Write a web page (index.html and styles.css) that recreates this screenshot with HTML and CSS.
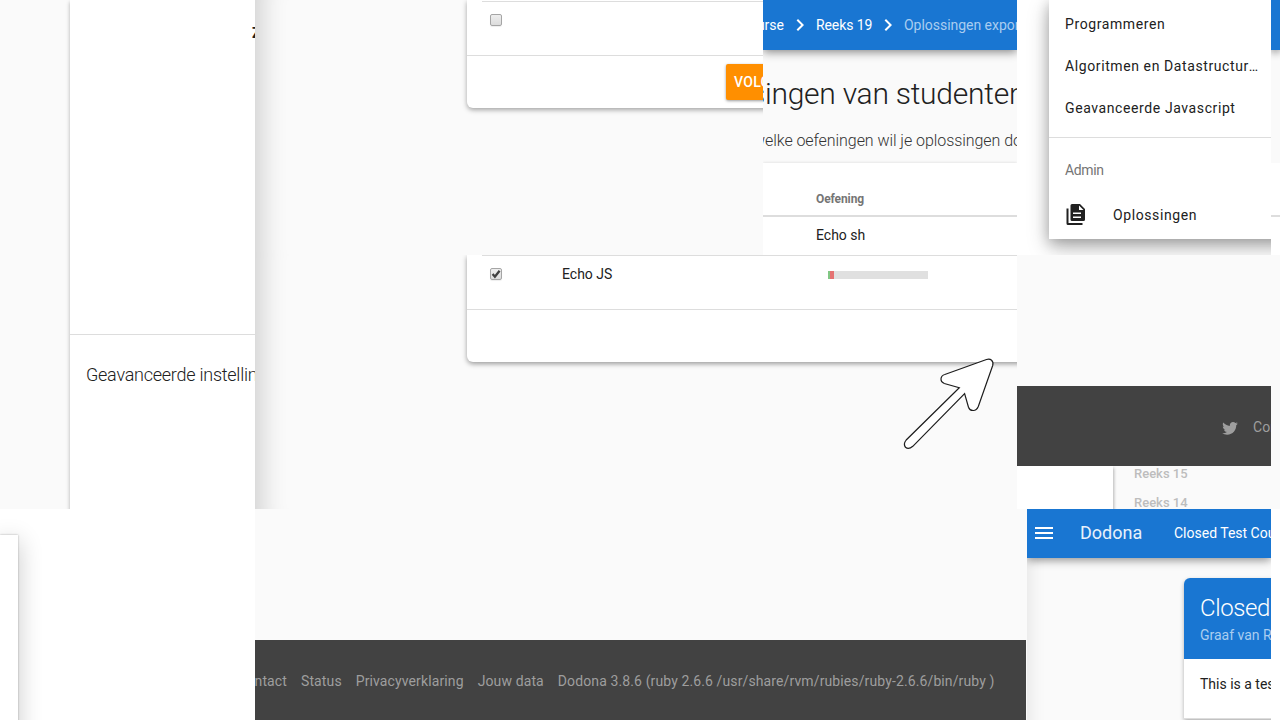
FILE: index.html
```html
<!DOCTYPE html>
<html lang="nl">
<head>
<meta charset="utf-8">
<title>Dodona</title>
<link rel="stylesheet" href="styles.css">
</head>
<body>
<main class="collage">
  <section class="tile settings">
    <div class="settings-card">
      <div class="settings-top"><span class="bold-cut">Z</span></div>
      <div class="settings-title">Geavanceerde instellingen</div>
    </div>
  </section>

  <section class="tile export-next">
    <div class="list-card">
      <div class="list-row"><span class="check"></span></div>
      <div class="list-actions"><span class="next-button">VOLGENDE</span></div>
    </div>
  </section>

  <section class="tile export-head">
    <header class="crumbs">
      <div class="crumb-cut"><span>Closed Test Course</span></div>
      <svg class="chevron" viewBox="0 0 24 24"><path d="M8.59 16.58 13.17 12 8.59 7.41 10 6l6 6-6 6z"/></svg>
      <span class="crumb">Reeks 19</span>
      <svg class="chevron" viewBox="0 0 24 24"><path d="M8.59 16.58 13.17 12 8.59 7.41 10 6l6 6-6 6z"/></svg>
      <span class="crumb-dim">Oplossingen exporteren</span>
    </header>
    <div class="headline">singen van studenten</div>
    <div class="subline">welke oefeningen wil je oplossingen downloaden?</div>
    <div class="export-table">
      <div class="table-head">Oefening</div>
      <div class="table-row">Echo sh</div>
    </div>
  </section>

  <section class="tile drawer-tile">
    <nav class="drawer">
      <div class="drawer-courses">
        <div class="drawer-item">Programmeren</div>
        <div class="drawer-item">Algoritmen en Datastructuren</div>
        <div class="drawer-item">Geavanceerde Javascript</div>
      </div>
      <div class="drawer-label">Admin</div>
      <div class="drawer-link">
        <svg class="doc-icon" viewBox="0 0 22 22"><path fill-rule="evenodd" d="M7 0h8l5 5v10.500a1.500 1.500 0 0 1-1.500 1.500H7a1.500 1.500 0 0 1-1.500-1.500v-14A1.500 1.500 0 0 1 7 0m7 1.500V6h4.500zM8 8.500V10h8V8.500zm0 4V14h8v-1.500z"/><path d="M1.500 4.500v15A1.500 1.500 0 0 0 3 21h14.500v-2h-14V4.500z"/></svg>
        <span>Oplossingen</span>
      </div>
    </nav>
  </section>

  <section class="tile edge">
    <div class="edge-bar"></div>
    <div class="edge-gap"></div>
    <div class="edge-head"></div>
  </section>

  <section class="tile export-list">
    <div class="result-card">
      <div class="result-row">
        <span class="check"><svg viewBox="0 0 12 12"><path d="M2.6 6.1 4.9 8.7 9.6 2.7" fill="none" stroke="#3f3f3f" stroke-width="2.3"/></svg></span>
        <span class="result-name">Echo JS</span>
        <span class="progress"><i class="good"></i><i class="bad"></i></span>
      </div>
      <div class="result-actions"></div>
    </div>
    <svg class="pointer" viewBox="0 0 94 94"><path d="M84.500 2.500C88.500 1 92 4 90.700 8.500L76.300 49.500Q74.500 53.700 71 53.500 67.500 53.300 66.500 50.200L62.600 36.700 10.800 89.300Q6.500 93 3.500 90.300 1 87 4.200 83L57.300 30.700 42.300 26.500Q38.800 25 39 21.800 39.400 18.300 42.800 17.500Z" fill="#fff" stroke="#1d1d1d" stroke-width="1.2"/></svg>
  </section>

  <section class="tile series">
    <div class="footer-start">
      <svg class="bird" viewBox="0 0 24 24"><path d="M22.460 6c-.77.35-1.600.58-2.460.69.88-.53 1.560-1.370 1.880-2.380-.83.5-1.750.85-2.720 1.050C18.370 4.500 17.260 4 16 4c-2.350 0-4.270 1.920-4.270 4.290 0 .34.04.67.11.98C8.280 9.090 5.110 7.380 3 4.790c-.37.63-.58 1.370-.58 2.150 0 1.490.75 2.810 1.910 3.560-.71 0-1.370-.2-1.950-.5v.03c0 2.080 1.480 3.820 3.440 4.210a4.220 4.220 0 0 1-1.930.07 4.280 4.280 0 0 0 4 2.980 8.521 8.521 0 0 1-5.330 1.840c-.34 0-.68-.02-1.020-.06C3.440 20.290 5.700 21 8.120 21 16 21 20.330 14.460 20.330 8.790c0-.19 0-.37-.01-.56.84-.6 1.560-1.360 2.140-2.230z"/></svg>
      <span>Contact</span>
    </div>
    <div class="series-body">
      <div class="series-sheet"></div>
      <div class="series-list"><span>Reeks 15</span><span>Reeks 14</span></div>
    </div>
  </section>

  <div class="edge-mid"></div>

  <div class="bottom">
    <section class="tile dialog-tile"><div class="dialog"></div></section>
    <section class="tile footer-tile">
      <footer class="footer">
        <div class="footer-cut"><span>Contact</span></div>
        <span>Status</span>
        <span>Privacyverklaring</span>
        <span>Jouw data</span>
        <span>Dodona 3.8.6 (ruby 2.6.6 /usr/share/rvm/rubies/ruby-2.6.6/bin/ruby )</span>
      </footer>
    </section>
    <section class="tile course">
      <header class="course-bar">
        <div class="burger"><i></i><i></i><i></i></div>
        <span class="brand">Dodona</span>
        <span>Closed Test Course</span>
      </header>
      <article class="course-card">
        <div class="course-head"><h2>Closed Test</h2><p>Graaf van Rommelgem</p></div>
        <div class="course-text">This is a test</div>
      </article>
    </section>
  </div>
</main>
</body>
</html>
```
FILE: styles.css
```css
* { box-sizing: border-box; }
body { margin: 0; background: #fff; color: #212121; font: 14px/20px Roboto, "Liberation Sans", sans-serif; }
.collage { display: grid; grid-template-columns: 255px 508px 254px 254px 9px; grid-template-rows: 255px 254px 211px; width: 1280px; height: 720px; overflow: hidden; }
.tile { overflow: hidden; background: #fafafa; min-width: 0; white-space: nowrap; }

.settings { grid-row: 1 / 3; padding-left: 70px; }
.settings-card { height: 560px; width: 300px; background: #fff; box-shadow: 0 2px 4px rgba(0,0,0,.3); }
.settings-top { height: 335px; padding: 23px 0 0 182px; border-bottom: 1px solid #ddd; }
.bold-cut { font-weight: 700; }
.settings-title { padding: 28px 16px; font-size: 18px; line-height: 24px; font-weight: 300; letter-spacing: -.25px; }

.export-next { grid-column: 2; padding-left: 212px; box-shadow: inset 32px 0 24px -24px rgba(0,0,0,.16); }
.list-card { width: 600px; height: 108px; padding-top: 1px; background: #fff; border-radius: 0 0 6px 6px; box-shadow: 0 2px 5px rgba(0,0,0,.35); }
.list-row { height: 54px; margin-left: 15px; padding: 12px 8px; border-top: 1px solid #ddd; }
.list-actions { border-top: 1px solid #ddd; height: 53px; padding: 8px 0 0 259px; }
.next-button { display: block; width: 100px; height: 36px; padding-left: 8px; border-radius: 2px; background: #ff8f00; color: #fff; font-weight: 500; line-height: 36px; letter-spacing: .3px; box-shadow: 0 1px 3px rgba(0,0,0,.4); }
.check { display: block; width: 12px; height: 12px; border: 1px solid #a5a5a5; border-radius: 2px; background: linear-gradient(#eee, #dcdcdc); box-shadow: 0 1px 1px #eee; }
.check svg { display: block; width: 12px; height: 12px; margin: -1px; }

.crumbs { display: flex; align-items: center; height: 50px; background: #1976d2; color: #fff; box-shadow: 0 2px 9px rgba(0,0,0,.48); }
.crumb-cut { width: 21px; display: flex; justify-content: flex-end; flex: none; }
.crumb { width: 56px; letter-spacing: -.1px; flex: none; }
.chevron { width: 24px; height: 24px; margin: 0 4px; fill: #fff; flex: none; }
.crumb-dim { color: #a9cdf0; letter-spacing: -.03px; }
.headline { height: 40px; margin: 24px 0 0 -13px; font-size: 30px; line-height: 40px; font-weight: 300; letter-spacing: -.25px; }
.subline { height: 24px; margin: 15px 0 0 -10px; font-size: 16px; line-height: 24px; font-weight: 300; color: #333; letter-spacing: -.06px; }
.export-table { margin-top: 10px; height: 100px; background: #fff; box-shadow: 0 0 3px rgba(0,0,0,.14); }
.table-head { height: 54px; padding: 26px 53px 0; font-size: 12px; font-weight: 700; color: #757575; border-bottom: 2px solid #ddd; letter-spacing: -.1px; }
.table-row { padding: 8px 53px; }

.drawer-tile { background: #fff; padding-left: 32px; }
.drawer { width: 270px; height: 239px; background: #fff; letter-spacing: .6px; box-shadow: 0 8px 20px rgba(0,0,0,.28), 0 3px 12px rgba(0,0,0,.2); }
.drawer-courses { display: flex; flex-direction: column; height: 138px; padding: 3px 0 0 16px; border-bottom: 1px solid #ddd; }
.drawer-item { width: 196px; line-height: 42px; overflow: hidden; text-overflow: ellipsis; }
.drawer-label { padding: 22px 16px 0; color: #757575; letter-spacing: -.35px; }
.drawer-link { display: flex; align-items: center; height: 24px; margin-top: 23px; padding-left: 16px; gap: 26px; }
.doc-icon { width: 22px; height: 22px; fill: #212121; }

.edge-bar { height: 50px; background: #1976d2; box-shadow: 0 2px 9px rgba(0,0,0,.48); }
.edge-gap { height: 113px; }
.edge-head { height: 92px; background: linear-gradient(#fff 52px, #ddd 52px, #ddd 54px, #fff 54px); }
.edge-mid { background: #fafafa; }

.export-list { grid-column: 2 / 4; padding-left: 212px; box-shadow: inset 32px 0 24px -24px rgba(0,0,0,.16); }
.result-card { width: 600px; height: 107px; background: #fff; border-radius: 0 0 6px 6px; box-shadow: 0 2px 5px rgba(0,0,0,.38); }
.result-row { display: flex; height: 54px; margin-left: 15px; padding: 8px 8px 0; border-top: 1px solid #ddd; }
.result-row .check { margin-top: 4px; }
.result-name { width: 266px; margin-left: 60px; }
.progress { display: flex; width: 100px; height: 8px; margin-top: 7px; background: #e0e0e0; }
.good { width: 2px; background: #81c784; }
.bad { width: 4px; background: #e57373; }
.result-actions { height: 53px; border-top: 1px solid #ddd; }
.pointer { position: relative; display: block; width: 94px; height: 94px; margin: -5px 0 0 435px; }

.footer-start { display: flex; align-items: center; gap: 14px; height: 80px; margin-top: 131px; padding: 2px 0 0 204px; background: #424242; color: #9e9e9e; letter-spacing: .1px; }
.bird { width: 18px; height: 18px; margin-top: 2px; fill: #9e9e9e; flex: none; }
.series-body { display: flex; height: 60px; }
.series-sheet { width: 96px; background: #fff; box-shadow: 1px 2px 3px rgba(0,0,0,.28); }
.series-list { display: flex; flex-direction: column; gap: 9px; padding: 0 21px; margin-top: -2px; font-size: 13px; font-weight: 500; color: #bdbdbd; }

.bottom { grid-column: 1 / 6; display: grid; grid-template-columns: 255px 772px 244px 9px; }
.dialog-tile { background: #fff; padding-top: 26px; }
.dialog { width: 18px; height: 220px; background: #fff; box-shadow: 0 6px 24px rgba(0,0,0,.24), 0 0 2px rgba(0,0,0,.3); }
.footer-tile { padding-top: 131px; }
.footer { display: flex; align-items: center; gap: 14px; width: 771px; height: 80px; padding-top: 2px; background: #424242; color: #9e9e9e; letter-spacing: .115px; }
.footer-cut { width: 32px; display: flex; justify-content: flex-end; flex: none; }
.course { box-shadow: inset 24px 0 16px -20px rgba(0,0,0,.08); }
.course-bar { display: flex; align-items: center; height: 49px; padding: 0 0 1px 8px; background: #1976d2; color: #fff; box-shadow: 0 2px 9px rgba(0,0,0,.45); }
.burger { display: flex; flex-direction: column; gap: 3px; width: 18px; margin-right: 27px; flex: none; }
.burger i { height: 2px; background: #fff; }
.brand { width: 94px; font-size: 18px; color: #e8f1fb; flex: none; }
.course-card { width: 300px; margin: 20px 0 0 157px; background: #fff; border-radius: 6px 6px 0 0; box-shadow: 0 2px 4px rgba(0,0,0,.3); }
.course-head { height: 81px; padding: 14px 16px 0; border-radius: 6px 6px 0 0; background: #1976d2; color: #a9cdf0; }
.course-head h2 { margin: 0; color: #fff; font-size: 24px; line-height: 32px; font-weight: 300; letter-spacing: -.4px; }
.course-head p { margin: 1px 0 0; }
.course-text { height: 60px; padding: 15px 16px; border-bottom: 1px solid #ddd; }
```
